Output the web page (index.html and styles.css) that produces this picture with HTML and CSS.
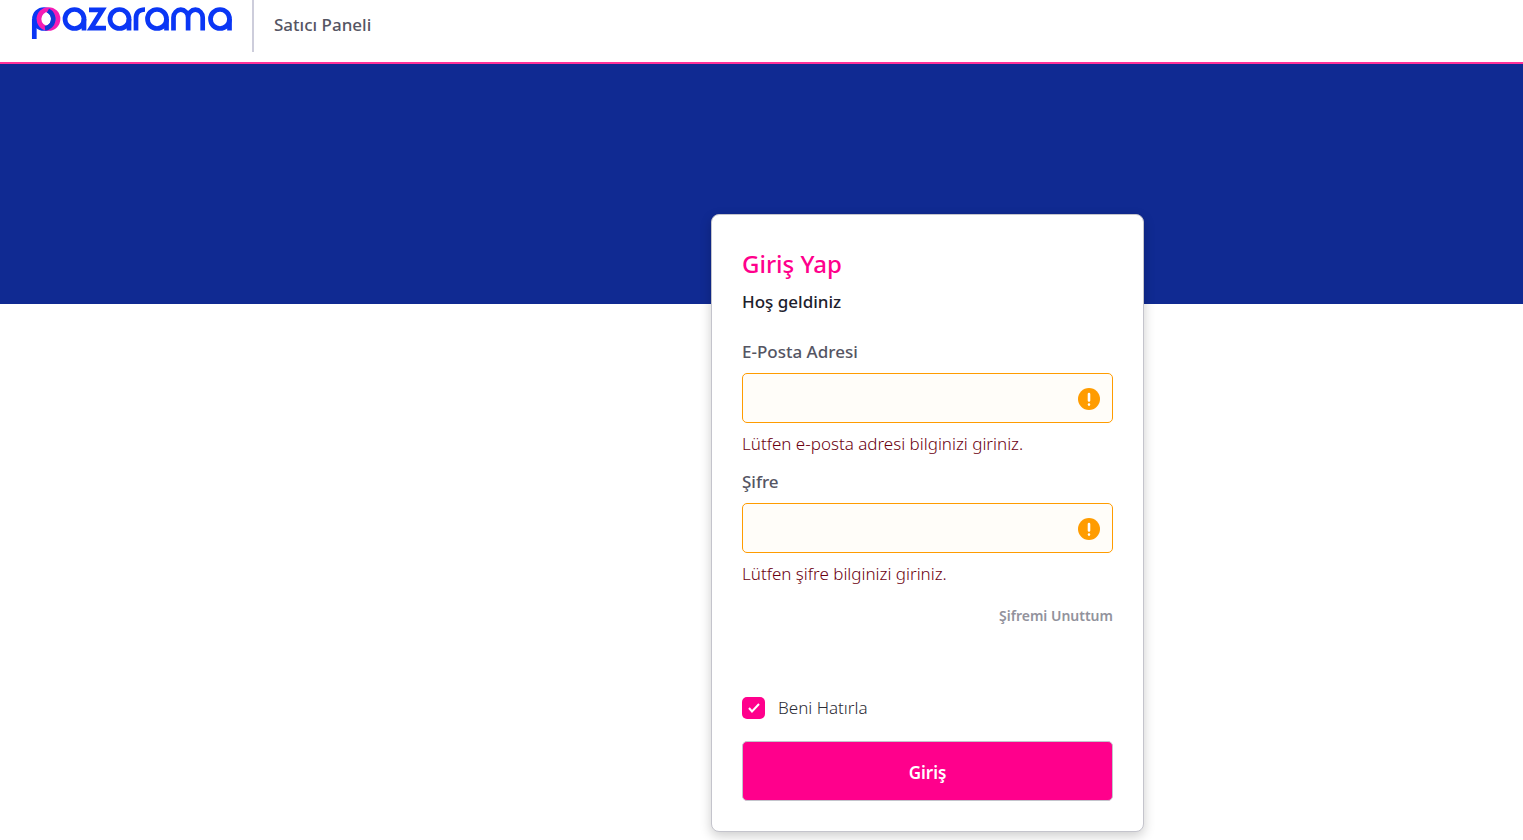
FILE: index.html
```
<!DOCTYPE html>
<html lang="tr">
<head>
    <meta charset="UTF-8">
    <meta name="viewport" content="width=device-width, initial-scale=1.0">
    <title>Pazarama - Satıcı Paneli</title>
    <link rel="stylesheet" href="styles.css">
</head>
<body>
    <!-- Header -->
    <header class="header">
        <a href="#" class="logo" aria-label="Pazarama">
            <svg width="202" height="34" viewBox="0 0 202 34" fill="none" stroke="#0a36f5" stroke-width="4.7">
                <path d="M3.300 33V13"/>
                <circle cx="13" cy="13" r="9.500"/>
                <circle cx="17.500" cy="13" r="9.500" stroke="#f51cb4"/>
                <path d="M17 4.500A9.500 9.500 0 0 1 14 22.400" stroke="#1238d6"/>
                <circle cx="43.500" cy="13" r="9.500"/>
                <path d="M53 13V24.500"/>
                <path d="M58 3.800H71.500L60 22.200H75"/>
                <circle cx="88.500" cy="13" r="9.500"/>
                <path d="M98 13V24.500"/>
                <path d="M105 24.500V12q0-8.500 9-8.500"/>
                <circle cx="126" cy="13" r="9.500"/>
                <path d="M135.500 13V24.500"/>
                <path d="M142.500 24.500V11.500a7.300 7.800 0 0 1 14.600 0V24.500M157.100 11.500a7.300 7.800 0 0 1 14.600 0V24.500"/>
                <circle cx="189" cy="13" r="9.500"/>
                <path d="M198.500 13V24.500"/>
            </svg>
        </a>
        <span class="header-title">Satıcı Paneli</span>
    </header>

    <!-- Login -->
    <main class="login">
        <form class="card" novalidate>
            <h1 class="card-title">Giriş Yap</h1>
            <p class="card-subtitle">Hoş geldiniz</p>

            <div class="field">
                <label for="email">E-Posta Adresi</label>
                <input type="email" id="email" class="input" aria-describedby="email-error">
                <p class="error" id="email-error">Lütfen e-posta adresi bilginizi giriniz.</p>
            </div>

            <div class="field">
                <label for="password">Şifre</label>
                <input type="password" id="password" class="input" aria-describedby="password-error">
                <p class="error" id="password-error">Lütfen şifre bilginizi giriniz.</p>
            </div>

            <a href="#" class="forgot">Şifremi Unuttum</a>

            <div class="remember">
                <input type="checkbox" id="remember" checked>
                <label for="remember">Beni Hatırla</label>
            </div>

            <button type="submit" class="btn">Giriş</button>
        </form>
    </main>
</body>
</html>
```
FILE: styles.css
```
* {
    box-sizing: border-box;
}

body {
    margin: 0;
    font-family: 'Segoe UI', 'Noto Sans', 'Open Sans', sans-serif;
    font-size: 17px;
    line-height: 24px;
    color: #555563;
    background-color: #fff;
}

h1, p {
    margin: 0;
}

.header {
    display: flex;
    align-items: flex-start;
    height: 64px;
    padding-left: 31px;
    border-bottom: 2px solid #ff3399;
}

.logo {
    height: 52px;
    padding: 6px 19px 0 0;
    border-right: 2px solid #cdcddb;
}

.logo svg {
    display: block;
}

.header-title {
    padding: 13px 0 0 20px;
    font-weight: 500;
}

/* blue band behind the top of the card */
.login {
    display: grid;
    grid-template-columns: 711fr 433px 379fr;
    padding: 150px 0 8px;
    background: linear-gradient(#102a92, #102a92) top / 100% 240px no-repeat;
}

.card {
    grid-column: 2;
    display: flex;
    flex-direction: column;
    padding: 31px 30px 30px;
    background-color: #fff;
    border: 1px solid #c4c4cc;
    border-radius: 8px;
    box-shadow: 0 4px 12px rgba(0, 0, 0, 0.2);
}

.card-title {
    font-size: 24px;
    line-height: 36px;
    font-weight: 500;
    color: #ff008c;
}

.card-subtitle {
    margin: 8px 0 26px;
    font-weight: 500;
    color: #20202c;
}

.field {
    margin-bottom: 14px;
}

.field label {
    display: block;
    margin-bottom: 9px;
    font-weight: 500;
}

.input {
    display: block;
    width: 100%;
    height: 50px;
    padding: 0 48px 0 12px;
    font: inherit;
    border: 1px solid #ff9c00;
    border-radius: 5px;
    background: #fffdf9 url("data:image/svg+xml,%3Csvg xmlns='http://www.w3.org/2000/svg' width='22' height='22'%3E%3Ccircle cx='11' cy='11' r='11' fill='%23ff9c00'/%3E%3Cpath d='M11 6v6.500M11 16.500v.1' stroke='white' stroke-width='2.600' stroke-linecap='round'/%3E%3C/svg%3E") right 12px top 14px no-repeat;
}

.error {
    margin-top: 9px;
    font-weight: 300;
    color: #6b0010;
}

.forgot {
    align-self: flex-end;
    margin-top: 4px;
    font-size: 14px;
    font-weight: 600;
    color: #92929c;
    text-decoration: none;
}

.remember {
    display: flex;
    align-items: center;
    gap: 13px;
    margin: 68px 0 21px;
    font-weight: 300;
    color: #2c2c36;
}

.remember input {
    appearance: none;
    width: 23px;
    height: 22px;
    margin: 0;
    border-radius: 5px;
    background: #ff008c url("data:image/svg+xml,%3Csvg xmlns='http://www.w3.org/2000/svg' width='12' height='10'%3E%3Cpath d='M1 5l3 3.500L11 1' fill='none' stroke='white' stroke-width='2'/%3E%3C/svg%3E") center no-repeat;
}

.btn {
    height: 60px;
    padding-top: 4px;
    font: inherit;
    font-weight: 600;
    color: #fff;
    background-color: #ff008c;
    border: 1px solid #c4c4cc;
    border-radius: 5px;
    cursor: pointer;
}
```
